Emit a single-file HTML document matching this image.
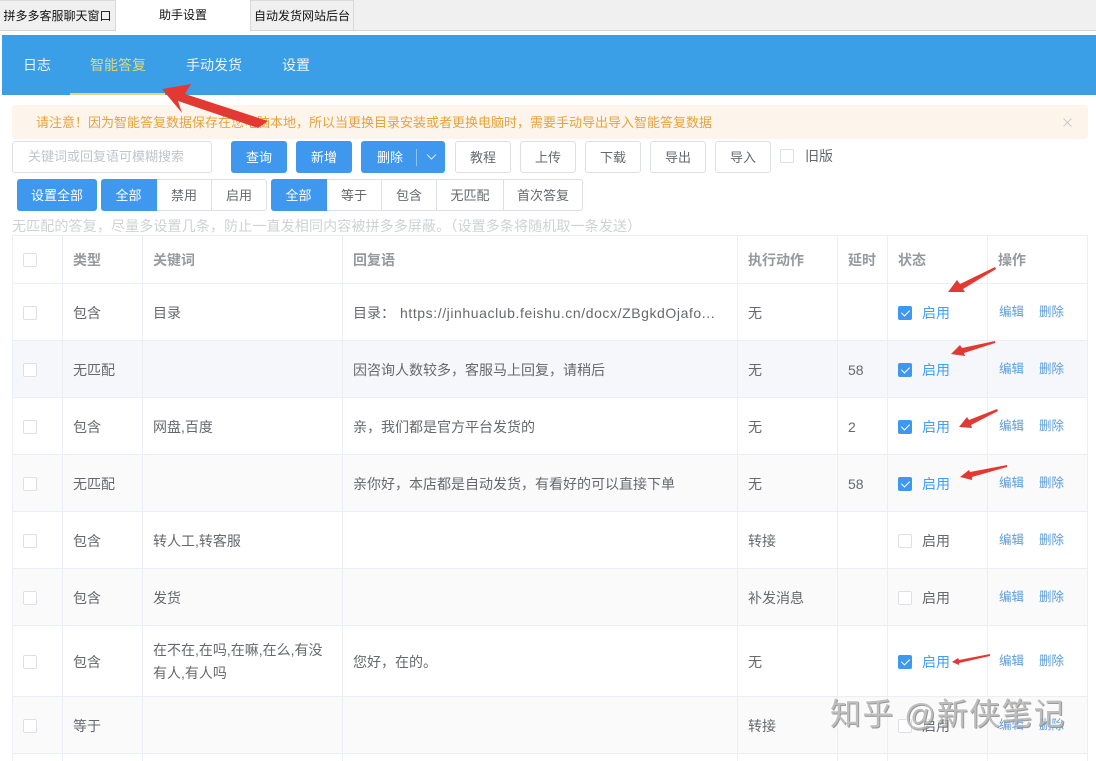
<!DOCTYPE html>
<html lang="zh-CN"><head><meta charset="utf-8"><title>助手设置</title>
<style>
*{box-sizing:border-box}
html,body{margin:0;padding:0;background:#fff}
body{width:1096px;height:761px;overflow:hidden;position:relative;font-family:"Liberation Sans","Noto Sans CJK SC",sans-serif;font-size:14px;color:#66686d}
.a{position:absolute}
.t{position:absolute;white-space:nowrap;line-height:20px;height:20px}
.tab{position:absolute;top:0;height:30px;background:#f0f0f0;border:1px solid #d9d9d9;border-bottom:0;font-size:12px;line-height:31px;color:#111;text-align:center;white-space:nowrap}
.btn{position:absolute;top:141px;height:32px;border-radius:3px;text-align:center;font-size:13px;line-height:32px;background:#fff;border:1px solid #dcdfe6;color:#66686d}
.p{background:#3f97ee;border-color:#3f97ee;color:#fff}
.s{position:absolute;top:179px;height:32px;text-align:center;font-size:13px;line-height:31px;background:#fff;border:1px solid #dcdfe6;border-left:0;color:#66686d}
.s.p{background:#3f97ee;border-color:#3f97ee;color:#fff}
.h{position:absolute;left:12px;width:1076px;height:1px;background:#ebeef5}
.v{position:absolute;top:236px;width:1px;height:525px;background:#ebeef5}
.b{position:absolute;left:12px;width:1076px}
.c{position:absolute;width:14px;height:14px;background:#fff;border:1px solid #dcdfe6;border-radius:2px}
.k{position:absolute;width:14px;height:14px;background:#3f97ee;border-radius:2px}
.k:after{content:"";position:absolute;left:4.500px;top:2px;width:4px;height:7px;border:solid #fff;border-width:0 1px 1px 0;transform:rotate(45deg)}
.th{font-weight:700;color:#97999e;font-size:14px}
.on{color:#409eff;font-size:14px}
.off{color:#66686d;font-size:14px}
.e{color:#5a9bdc;font-size:12.500px}
</style></head><body>
<div class="a" style="left:0;top:0;width:1096px;height:30px;background:#f0f0f0"></div>
<div class="a" style="left:0;top:30px;width:1096px;height:1px;background:#d4d4d4"></div>
<div class="tab" style="left:-1px;width:117px">拼多多客服聊天窗口</div>
<div class="a" style="left:116px;top:0;width:134px;height:31px;background:#fff"></div>
<div class="t" style="left:159px;top:5px;font-size:12px;color:#111">助手设置</div>
<div class="tab" style="left:250px;width:104px">自动发货网站后台</div>

<div class="a" style="left:2px;top:35px;width:1094px;height:60px;background:#3a9fe6"></div>
<div class="t" style="left:23px;top:55px;color:#eaf4fc;font-size:14px">日志</div>
<div class="t" style="left:90px;top:55px;color:#e6d67c;font-size:14px">智能答复</div>
<div class="t" style="left:186px;top:55px;color:#eaf4fc;font-size:14px">手动发货</div>
<div class="t" style="left:282px;top:55px;color:#eaf4fc;font-size:14px">设置</div>
<div class="a" style="left:70px;top:93px;width:95px;height:2px;background:#e6d67c"></div>

<div class="a" style="left:12px;top:105px;width:1076px;height:34px;background:#fdf5ec;border-radius:3px"></div>
<div class="t" style="left:36px;top:113px;font-size:13px;color:#e6a23c">请注意&#65281;因为智能答复数据保存在您电脑本地&#65292;所以当更换目录安装或者更换电脑时&#65292;需要手动导出导入智能答复数据</div>
<svg class="a" style="left:1063px;top:118px" width="9" height="9"><path d="M.5.5l8 8M8.500.5l-8 8" stroke="#c8c9cc" fill="none"/></svg>

<div class="a" style="left:12px;top:141px;width:200px;height:32px;border:1px solid #dcdfe6;border-radius:3px"></div>
<div class="t" style="left:28px;top:147px;font-size:13px;color:#c0c4cc">关键词或回复语可模糊搜索</div>
<div class="btn p" style="left:231px;width:56px">查询</div>
<div class="btn p" style="left:296px;width:56px">新增</div>
<div class="btn p" style="left:361px;width:84px;text-align:left;padding-left:15px">删除</div>
<div class="a" style="left:416px;top:149px;width:1px;height:17px;background:#8cc2f5"></div>
<svg class="a" style="left:426px;top:153px" width="11" height="8"><path d="M1 1.500l4.500 4.500 4.500-4.500" stroke="#dcecfc" fill="none"/></svg>
<div class="btn" style="left:455px;width:56px">教程</div>
<div class="btn" style="left:520px;width:56px">上传</div>
<div class="btn" style="left:585px;width:56px">下载</div>
<div class="btn" style="left:650px;width:56px">导出</div>
<div class="btn" style="left:715px;width:56px">导入</div>
<div class="c" style="left:780px;top:149px"></div>
<div class="t" style="left:805px;top:146px;font-size:14px">旧版</div>

<div class="s p" style="left:17px;width:80px;border-radius:3px;border-left:1px solid #3f97ee">设置全部</div>
<div class="s p" style="left:101px;width:56px;border-radius:3px 0 0 3px">全部</div>
<div class="s" style="left:157px;width:55px">禁用</div>
<div class="s" style="left:212px;width:55px;border-radius:0 3px 3px 0">启用</div>
<div class="s p" style="left:271px;width:56px;border-radius:3px 0 0 3px">全部</div>
<div class="s" style="left:327px;width:55px">等于</div>
<div class="s" style="left:382px;width:55px">包含</div>
<div class="s" style="left:437px;width:67px">无匹配</div>
<div class="s" style="left:504px;width:79px;border-radius:0 3px 3px 0">首次答复</div>
<div class="t" style="left:12px;top:216px;font-size:14px;letter-spacing:.14px;color:#cfd1d6">无匹配的答复&#65292;尽量多设置几条&#65292;防止一直发相同内容被拼多多屏蔽&#12290;&#65288;设置多条将随机取一条发送&#65289;</div>

<div class="b" style="top:341px;height:56px;background:#f5f7fa"></div>
<div class="b" style="top:455px;height:56px;background:#fafafa"></div>
<div class="b" style="top:569px;height:56px;background:#fafafa"></div>
<div class="b" style="top:697px;height:56px;background:#fafafa"></div>
<div class="h" style="top:235px"></div><div class="h" style="top:283px"></div><div class="h" style="top:340px"></div><div class="h" style="top:397px"></div><div class="h" style="top:454px"></div><div class="h" style="top:511px"></div><div class="h" style="top:568px"></div><div class="h" style="top:625px"></div><div class="h" style="top:696px"></div><div class="h" style="top:753px"></div>
<div class="v" style="left:12px"></div><div class="v" style="left:62px"></div><div class="v" style="left:142px"></div><div class="v" style="left:342px"></div><div class="v" style="left:737px"></div><div class="v" style="left:837px"></div><div class="v" style="left:887px"></div><div class="v" style="left:987px"></div><div class="v" style="left:1087px"></div>

<div class="c" style="left:23px;top:253px"></div>
<div class="t th" style="left:73px;top:250px">类型</div>
<div class="t th" style="left:153px;top:250px">关键词</div>
<div class="t th" style="left:353px;top:250px">回复语</div>
<div class="t th" style="left:748px;top:250px">执行动作</div>
<div class="t th" style="left:848px;top:250px">延时</div>
<div class="t th" style="left:898px;top:250px">状态</div>
<div class="t th" style="left:998px;top:250px">操作</div>

<div class="c" style="left:23px;top:306px"></div><div class="t" style="left:73px;top:303px">包含</div><div class="t" style="left:153px;top:303px">目录</div><div class="t" style="left:353px;top:303px">目录&#65306;<span style="margin-left:5px;letter-spacing:.58px">https://jinhuaclub.feishu.cn/docx/ZBgkdOjafo...</span></div><div class="t" style="left:748px;top:303px">无</div><div class="k" style="left:898px;top:306px"></div><div class="t on" style="left:922px;top:303px">启用</div><div class="t e" style="left:999px;top:302px">编辑</div><div class="t e" style="left:1039px;top:302px">删除</div>

<div class="c" style="left:23px;top:363px"></div><div class="t" style="left:73px;top:360px">无匹配</div><div class="t" style="left:353px;top:360px">因咨询人数较多&#65292;客服马上回复&#65292;请稍后</div><div class="t" style="left:748px;top:360px">无</div><div class="t" style="left:848px;top:360px">58</div><div class="k" style="left:898px;top:363px"></div><div class="t on" style="left:922px;top:360px">启用</div><div class="t e" style="left:999px;top:359px">编辑</div><div class="t e" style="left:1039px;top:359px">删除</div>

<div class="c" style="left:23px;top:420px"></div><div class="t" style="left:73px;top:417px">包含</div><div class="t" style="left:153px;top:417px">网盘,百度</div><div class="t" style="left:353px;top:417px">亲&#65292;我们都是官方平台发货的</div><div class="t" style="left:748px;top:417px">无</div><div class="t" style="left:848px;top:417px">2</div><div class="k" style="left:898px;top:420px"></div><div class="t on" style="left:922px;top:417px">启用</div><div class="t e" style="left:999px;top:416px">编辑</div><div class="t e" style="left:1039px;top:416px">删除</div>

<div class="c" style="left:23px;top:477px"></div><div class="t" style="left:73px;top:474px">无匹配</div><div class="t" style="left:353px;top:474px">亲你好&#65292;本店都是自动发货&#65292;有看好的可以直接下单</div><div class="t" style="left:748px;top:474px">无</div><div class="t" style="left:848px;top:474px">58</div><div class="k" style="left:898px;top:477px"></div><div class="t on" style="left:922px;top:474px">启用</div><div class="t e" style="left:999px;top:473px">编辑</div><div class="t e" style="left:1039px;top:473px">删除</div>

<div class="c" style="left:23px;top:534px"></div><div class="t" style="left:73px;top:531px">包含</div><div class="t" style="left:153px;top:531px">转人工,转客服</div><div class="t" style="left:748px;top:531px">转接</div><div class="c" style="left:898px;top:534px"></div><div class="t off" style="left:922px;top:531px">启用</div><div class="t e" style="left:999px;top:530px">编辑</div><div class="t e" style="left:1039px;top:530px">删除</div>

<div class="c" style="left:23px;top:591px"></div><div class="t" style="left:73px;top:588px">包含</div><div class="t" style="left:153px;top:588px">发货</div><div class="t" style="left:748px;top:588px">补发消息</div><div class="c" style="left:898px;top:591px"></div><div class="t off" style="left:922px;top:588px">启用</div><div class="t e" style="left:999px;top:587px">编辑</div><div class="t e" style="left:1039px;top:587px">删除</div>

<div class="c" style="left:23px;top:655px"></div><div class="t" style="left:73px;top:652px">包含</div><div class="t" style="left:153px;top:640px">在不在,在吗,在嘛,在么,有没</div><div class="t" style="left:153px;top:663px">有人,有人吗</div><div class="t" style="left:353px;top:652px">您好&#65292;在的&#12290;</div><div class="t" style="left:748px;top:652px">无</div><div class="k" style="left:898px;top:655px"></div><div class="t on" style="left:922px;top:652px">启用</div><div class="t e" style="left:999px;top:651px">编辑</div><div class="t e" style="left:1039px;top:651px">删除</div>

<div class="c" style="left:23px;top:719px"></div><div class="t" style="left:73px;top:716px">等于</div><div class="t" style="left:748px;top:716px">转接</div><div class="c" style="left:898px;top:719px"></div><div class="t off" style="left:922px;top:716px">启用</div><div class="t e" style="left:999px;top:715px">编辑</div><div class="t e" style="left:1039px;top:715px">删除</div>

<svg class="a" style="left:0;top:0" width="1096" height="761" viewBox="0 0 1096 761">
<g fill="#e23a33">
<polygon points="162,89 191,84 185,94 268,121 258,128 178,101 182,113"/>
<polygon points="948,292 957,280 960,284 995,267 996,269 963,289 965,292"/>
<polygon points="951,354 960,345 962,348 995,341 995,343 964,353 965,356"/>
<polygon points="959,427 967,417 969,420 997,409 998,411 971,425 972,428"/>
<polygon points="960,477 969,470 970,472 1007,465 1007,467 972,477 972,480"/>
<polygon points="952,662 958,658 959,660 990,654 990,656 959,663 959,665"/>
</g></svg>

<div class="t" style="left:830px;top:696px;height:38px;line-height:38px;font-size:31px;color:#b4b4b4;letter-spacing:1.200px;text-shadow:1px 1px 0 #8a8a8a,-1px -1px 0 #fff;opacity:.85">知乎 @新侠笔记</div>
</body></html>
